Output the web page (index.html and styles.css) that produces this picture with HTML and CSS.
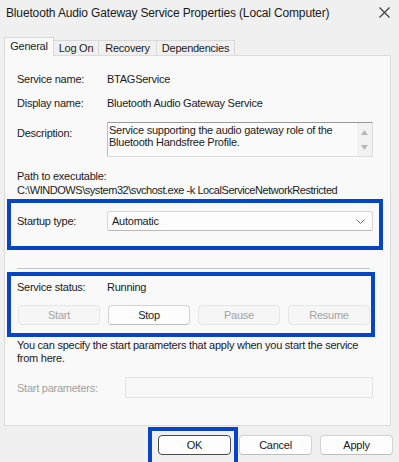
FILE: index.html
```html
<!DOCTYPE html>
<html>
<head>
<meta charset="utf-8">
<link rel="stylesheet" href="styles.css">
</head>
<body>
<div class="window">
  <div class="titlebar">
    <span class="title">Bluetooth Audio Gateway Service Properties (Local Computer)</span>
    <svg class="close" width="11" height="11" viewBox="0 0 11 11"><path d="M0.5 0.5 L10.5 10.5 M10.5 0.5 L0.5 10.5" stroke="#3a3a3a" stroke-width="1.1" fill="none"/></svg>
  </div>
  <div class="tabs">
    <div class="tab active t-general">General</div>
    <div class="tab t-logon">Log On</div>
    <div class="tab t-recovery">Recovery</div>
    <div class="tab t-deps">Dependencies</div>
  </div>
  <div class="panel">
    <div class="field r-name"><span>Service name:</span><span>BTAGService</span></div>
    <div class="field r-display"><span>Display name:</span><span>Bluetooth Audio Gateway Service</span></div>
    <div class="field r-desc">
      <span class="desc-label">Description:</span>
      <div class="descbox">
        <div class="desc-text">Service supporting the audio gateway role of the Bluetooth Handsfree Profile.</div>
        <div class="scroll">
          <svg width="7" height="5" viewBox="0 0 7 5"><path d="M3.5 0 L7 5 L0 5 Z" fill="#b9b9b9"/></svg>
          <svg width="7" height="5" viewBox="0 0 7 5"><path d="M0 0 L7 0 L3.5 5 Z" fill="#b9b9b9"/></svg>
        </div>
      </div>
    </div>
    <div class="path-label">Path to executable:</div>
    <div class="path-value">C:\WINDOWS\system32\svchost.exe -k LocalServiceNetworkRestricted</div>
    <div class="highlight startup">
      <div class="field r-startup">
        <span>Startup type:</span>
        <div class="combo"><span>Automatic</span>
          <svg width="9" height="5" viewBox="0 0 9 5"><path d="M0.5 0.5 L4.5 4.5 L8.5 0.5" stroke="#6a6a6a" stroke-width="1" fill="none"/></svg>
        </div>
      </div>
    </div>
    <div class="separator"></div>
    <div class="highlight status">
      <div class="field r-status"><span>Service status:</span><span>Running</span></div>
      <div class="svc-buttons">
        <div class="btn disabled">Start</div>
        <div class="btn">Stop</div>
        <div class="btn disabled">Pause</div>
        <div class="btn disabled">Resume</div>
      </div>
    </div>
    <div class="info">You can specify the start parameters that apply when you start the service<br>from here.</div>
    <div class="field r-params"><span class="muted">Start parameters:</span><div class="param-input"></div></div>
  </div>
  <div class="footer">
    <div class="ok-focus"><div class="btn dlg default">OK</div></div>
    <div class="btn dlg cancel">Cancel</div>
    <div class="btn dlg apply">Apply</div>
  </div>
</div>
</body>
</html>
```

FILE: styles.css
```css
* { box-sizing: border-box; }
html, body {
  margin: 0;
  padding: 0;
}
body {
  width: 399px;
  height: 462px;
  overflow: hidden;
  background: #f0f0f0;
  font-family: "Liberation Sans", Arial, sans-serif;
  font-size: 11px;
  letter-spacing: -0.25px;
  color: #1b1b1b;
}
.window {
  width: 399px;
  height: 462px;
}
.titlebar {
  height: 37px;
  display: flex;
  justify-content: space-between;
  align-items: flex-start;
}
.title {
  margin: 5px 0 0 6px;
  font-size: 12px;
  line-height: 16px;
  letter-spacing: -0.15px;
  color: #1a1a1a;
}
.close {
  margin: 7px 9px 0 0;
}
.tabs {
  display: flex;
  height: 18px;
  margin-left: 4px;
  position: relative;
  z-index: 1;
}
.tab {
  height: 15px;
  margin-top: 3px;
  border: 1px solid #d9d9d9;
  border-bottom: none;
  border-left: none;
  background: #f0f0f0;
  text-align: center;
  line-height: 14px;
  color: #1b1b1b;
}
.tab.active {
  height: 19px;
  margin-top: 0;
  border-left: 1px solid #d9d9d9;
  background: #f9f9f9;
  line-height: 16px;
}
.t-general { width: 50px; }
.t-logon { width: 45px; }
.t-recovery { width: 58px; }
.t-deps { width: 78px; }
.panel {
  margin: 0 8px 0 4px;
  height: 371px;
  border: 1px solid #dcdcdc;
  background: #f9f9f9;
  padding: 15px 17px 0 12px;
}
.field {
  display: grid;
  grid-template-columns: 90px 1fr;
  align-items: center;
  line-height: 16px;
}
.r-display { margin-top: 8px; }
.r-desc {
  margin-top: 11px;
  align-items: start;
}
.desc-label { padding-top: 3px; }
.descbox {
  height: 35px;
  display: flex;
  border: 1px solid #dedede;
  border-top-color: #9a9a9a;
  border-left-color: #bdbdbd;
  background: #fbfbfb;
}
.desc-text {
  flex: 1;
  padding: 1px 0 0 1px;
  line-height: 12px;
}
.scroll {
  width: 15px;
  background: #f2f2f2;
  display: flex;
  flex-direction: column;
  align-items: center;
  justify-content: space-between;
  padding: 7px 0 6px;
}
.path-label {
  margin-top: 12px;
  line-height: 14px;
}
.path-value {
  line-height: 14px;
  letter-spacing: -0.45px;
  white-space: nowrap;
}
.highlight {
  border: 4px solid #0745c6;
}
.startup {
  margin: 2px -10px 0 -10px;
  padding: 8px 6px 15px 6px;
}
.combo {
  height: 20px;
  border: 1px solid #d7d7d7;
  border-bottom-color: #b9b9b9;
  border-radius: 3px;
  background: #fdfdfd;
  display: flex;
  align-items: center;
  justify-content: space-between;
  padding: 0 7px 0 4px;
}
.separator {
  margin: 18px 3px 0 0;
  height: 1px;
  background: #c6c6c6;
}
.status {
  margin: 3px -2px 0 -10px;
  padding: 3px 6px 8px 6px;
}
.svc-buttons {
  display: grid;
  grid-template-columns: repeat(4, 82px);
  column-gap: 8px;
  margin: 10px 0 0 1px;
}
.btn {
  height: 20px;
  border: 1px solid #d2d2d2;
  border-bottom-color: #bdbdbd;
  border-radius: 4px;
  background: #fdfdfd;
  text-align: center;
  line-height: 18px;
  color: #1b1b1b;
}
.btn.disabled {
  background: #f6f6f6;
  border-color: #e6e6e6;
  color: #a3a3a3;
}
.info {
  margin-top: 2px;
  line-height: 13px;
}
.r-params {
  margin-top: 12px;
  grid-template-columns: 108px 1fr;
}
.muted { color: #a0a0a0; }
.param-input {
  height: 21px;
  border: 1px solid #e4e4e4;
  background: #f8f8f8;
}
.footer {
  display: flex;
  justify-content: flex-end;
  align-items: flex-start;
  margin-top: 1px;
  padding-right: 6px;
}
.ok-focus {
  border: 4px solid #0745c6;
  padding: 4px 3px 10px 6px;
}
.dlg { width: 73px; }
.default { border: 1px solid #4a4a4a; }
.cancel { margin-top: 8px; margin-left: 1px; }
.apply { margin-top: 8px; margin-left: 8px; }
```
